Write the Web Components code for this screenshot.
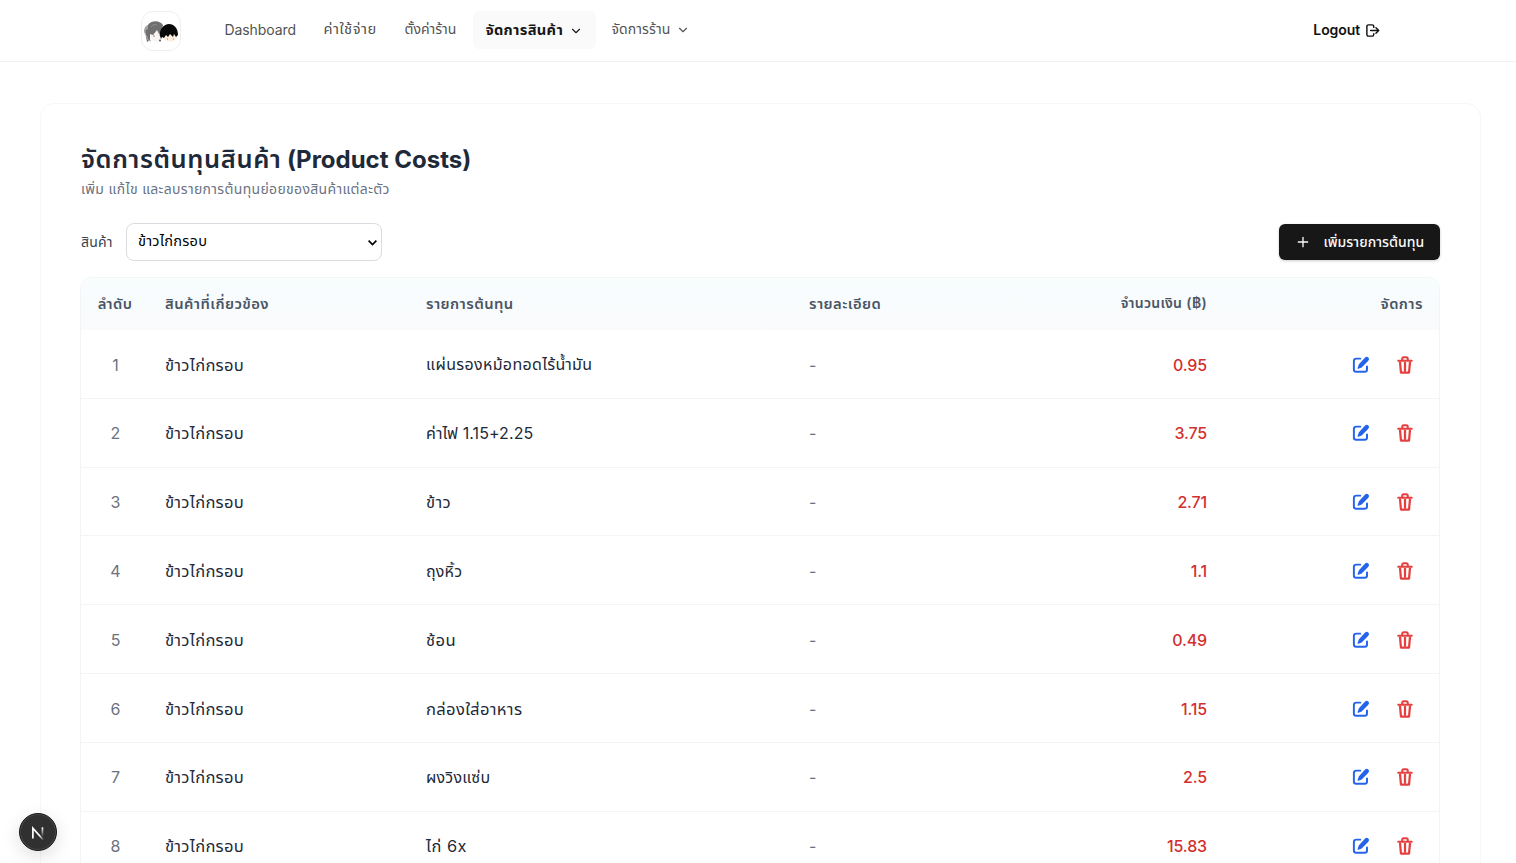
<!DOCTYPE html>
<html lang="th">
<head>
<meta charset="utf-8">
<title>Product Costs</title>
<style>
html,body{margin:0;height:863px;overflow:hidden;background:#fff}
body{font-family:Inter,"Noto Sans Thai","Noto Sans",sans-serif;color:#1e2939}
</style>
</head>
<body>
<cost-app></cost-app>
<script>
const define = (name, html) => customElements.define(name, class extends HTMLElement {
  connectedCallback() {
    if (this.shadowRoot) return;
    const root = this.attachShadow({mode: 'open'});
    root.innerHTML = typeof html === 'function' ? html(this) : html;
  }
});

const icons = {
  chevron: '<path d="m5 8.500 7 7 7-7" fill="none" stroke="currentColor" stroke-width="2.200" stroke-linecap="round" stroke-linejoin="round"/>',
  select: '<path d="m3.500 8 8.500 8.500L20.500 8" fill="none" stroke="currentColor" stroke-width="3.600"/>',
  plus: '<path d="M5 12h14M12 5v14" fill="none" stroke="currentColor" stroke-width="2" stroke-linecap="round"/>',
  logout: '<path d="M14 7V5.500A2.500 2.500 0 0 0 11.500 3H5.500A2.500 2.500 0 0 0 3 5.500v13A2.500 2.500 0 0 0 5.500 21h6a2.500 2.500 0 0 0 2.500-2.500V17M9 12h13M17.500 7.500 22 12l-4.500 4.500" fill="none" stroke="currentColor" stroke-width="2.300" stroke-linecap="round" stroke-linejoin="round"/>',
  edit: '<path d="M11 3.500H5.500a3 3 0 0 0-3 3v11.500a3 3 0 0 0 3 3H17a3 3 0 0 0 3-3v-4" fill="none" stroke="currentColor" stroke-width="2.600" stroke-linecap="round"/><path d="M18.100 2.700a2.100 2.100 0 0 1 3 3L12.600 14.400 8.300 16.200l1.600-4.700z" fill="currentColor" stroke="currentColor" stroke-width="1.800" stroke-linejoin="round"/>',
  trash: '<path d="M3 6.300h18M8.300 6V3.800a2 2 0 0 1 2-2h3.400a2 2 0 0 1 2 2V6" fill="none" stroke="currentColor" stroke-width="2.700" stroke-linecap="round" stroke-linejoin="round"/><path d="M5.300 7.500 6.600 22h10.800l1.300-14.500" fill="none" stroke="currentColor" stroke-width="3" stroke-linejoin="round"/><path d="M12 8v13" stroke="currentColor" stroke-width="3"/>'
};
define('ui-icon', el => `<style>:host{display:inline-flex;width:var(--icon,16px);height:var(--icon,16px);flex:none}svg{display:block;width:100%;height:100%;overflow:visible}</style><svg viewBox="0 0 24 24" aria-hidden="true">${icons[el.getAttribute('name')]}</svg>`);

define('brand-logo', `<style>:host{display:block;box-sizing:border-box;width:40px;height:40px;margin:1px 0 0 1px;border:1px solid #eee;border-radius:12px;overflow:hidden;background:#fff}svg{display:block}</style>
<svg width="38" height="38" viewBox="0 0 38 38">
<path d="M7 17h13v11l-5 2-6-2z" fill="#faf4f3"/><path d="M21 21h14v6l-6 3-7-2z" fill="#fdeee0"/>
<path d="M6 13c2-4 11-6 15 0l-2 8-2 1-2-4-4 5-3-1v6l-3 2-1-5-1-6z" fill="#6f6f70"/>
<path d="M6 13c-4 1-5 7-3 9l1-4 2-1z" fill="#a3a1a4"/><path d="M4 23l2 5 3 1" stroke="#aaa" fill="none"/>
<path d="M9 15c1-2 4-3 6-2" stroke="#929292" fill="none"/>
<path d="M18 24c-1-7 4-12 9-12s9 4 9 11l-2 2-2-3-1 3-3-3-2 3-2-2-2 3-2-1-1 2z" fill="#080808"/>
<circle cx="18" cy="28.500" r="1" fill="#555"/><path d="M11 24h2M17 23h1M25 27h1M31 27h1" stroke="#888"/>
</svg>`);

define('nav-item', el => `<style>
:host{display:flex;align-items:center;gap:7px;height:37px;box-sizing:border-box;font-size:14px;color:#525252;white-space:nowrap;border-radius:6px}
:host([active]){background:#fafafa;color:#171717;font-weight:700}
ui-icon{--icon:12px;margin-top:1px}
</style><slot></slot>${el.hasAttribute('menu') ? '<ui-icon name="chevron"></ui-icon>' : ''}`);

define('top-bar', `<style>
:host{display:flex;align-items:center;box-sizing:border-box;height:62px;padding:0 136px 1px 140px;border-bottom:1px solid #f1f1f2;background:#fff}
nav{display:grid;grid-template-columns:99.500px 81px 68px 123px 100px;margin-left:43px}
nav-item.latin{letter-spacing:-.08px;padding:0 0 1px .4px}
nav-item.wide{font-size:14.700px;letter-spacing:.5px}
nav-item.active{height:38px;padding:0 13px;font-size:14.700px;letter-spacing:.3px}
nav-item.last{padding-left:16px;letter-spacing:.1px}
.out{margin-left:auto;display:flex;align-items:center;gap:5px;font-size:14px;font-weight:600;color:#111}
.out span{padding-bottom:1px;letter-spacing:-.1px}
.out ui-icon{--icon:15px}
</style>
<brand-logo></brand-logo>
<nav><nav-item class="latin">Dashboard</nav-item><nav-item class="wide">ค่าใช้จ่าย</nav-item><nav-item>ตั้งค่าร้าน</nav-item><nav-item class="active" active menu>จัดการสินค้า</nav-item><nav-item class="last" menu>จัดการร้าน</nav-item></nav>
<div class="out"><span>Logout</span><ui-icon name="logout"></ui-icon></div>`);

define('product-select', `<style>
:host{display:flex;align-items:center;justify-content:space-between;box-sizing:border-box;width:256px;height:38px;padding:0 3px 0 11.500px;border:1px solid #d9dce1;border-radius:8px;font-size:14.600px;letter-spacing:.2px;color:#000;background:#fff}
ui-icon{--icon:11px}
</style><slot></slot><ui-icon name="select"></ui-icon>`);

define('primary-button', `<style>
:host{display:flex;align-items:center;gap:12.500px;box-sizing:border-box;width:161px;height:36px;padding:0 16px;border-radius:6px;background:#171717;color:#fafafa;font-size:14px;font-weight:500;letter-spacing:.05px;white-space:nowrap;box-shadow:0 1px 3px #0003}
ui-icon{--icon:16px}
</style><ui-icon name="plus"></ui-icon><slot></slot>`);

const columns = '68px 261px 383px 430px 216px';
define('cost-head', `<style>
:host{display:grid;grid-template-columns:${columns};align-items:center;height:52px;padding-top:1px;box-sizing:border-box;background:linear-gradient(#f8fdfe,#f9fafc);color:#4a5565;font-size:14.800px;font-weight:600;letter-spacing:.42px;white-space:nowrap}
span{padding:0 16px}.r{text-align:right}.c{text-align:center;padding:0}
.pair{display:flex;justify-content:space-between}b{font-weight:inherit}.money{font-size:14px;letter-spacing:.33px}
</style><span class="c">ลำดับ</span><span>สินค้าที่เกี่ยวข้อง</span><span>รายการต้นทุน</span><span class="pair"><b>รายละเอียด</b><b class="money">จำนวนเงิน (฿)</b></span><span class="r">จัดการ</span>`);

define('cost-row', el => `<style>
:host{display:grid;grid-template-columns:${columns};align-items:center;box-sizing:border-box;height:68.800px;padding-top:1.500px;border-bottom:1px solid #f3f4f6;font-size:16px;white-space:nowrap}
span{padding:0 16px}.n{text-align:center;padding:0 0 0 1px;color:#6a7282}
.th{font-size:16.600px;letter-spacing:.28px;padding-top:1px}.name{font-size:var(--size,16.600px);letter-spacing:var(--track,.28px)}
.d{display:flex;justify-content:space-between;color:#6a7282}.d b{font-weight:500;letter-spacing:-.15px;color:#d32f2f}i{font-style:normal}
.a{display:flex;justify-content:flex-end;gap:26px;padding-right:25px}
ui-icon{--icon:18px}.e{color:#2563eb}.t{color:#e5403f}
</style><span class="n">${el.getAttribute('no')}</span><span class="th">ข้าวไก่กรอบ</span><span class="th name"><slot></slot></span><span class="d"><i>-</i><b>${el.getAttribute('cost')}</b></span><span class="a"><ui-icon class="e" name="edit"></ui-icon><ui-icon class="t" name="trash"></ui-icon></span>`);

define('cost-table', `<style>
:host{display:block;box-sizing:border-box;width:1360px;border:1px solid #f2f4f6;border-radius:12px;overflow:hidden}
</style><cost-head></cost-head><slot></slot>`);

define('dev-badge', `<style>
:host{position:fixed;left:19px;top:813px;width:38px;height:38px;box-sizing:border-box;border-radius:50%;background:#303030;border:1px solid #171717;box-shadow:inset 0 0 0 1px #484848,0 5px 18px #0002}
svg{display:block}
</style><svg width="36" height="36" viewBox="0 0 36 36"><defs><linearGradient id="a" x2="1" y2="1"><stop offset=".65" stop-color="#fff"/><stop offset="1" stop-color="#fff" stop-opacity=".2"/></linearGradient><linearGradient id="b" x2="0" y2="1"><stop stop-color="#fff"/><stop offset="1" stop-color="#fff" stop-opacity="0"/></linearGradient></defs><path d="M12.900 24.500V14.200L23 25.500" fill="none" stroke="url(#a)" stroke-width="1.700"/><rect x="21.600" y="13.300" width="1.700" height="9.500" fill="url(#b)"/></svg>`);

const rows = [['แผ่นรองหม้อทอดไร้น้ำมัน','0.95',16,.35],['ค่าไฟ 1.15+2.25','3.75',16,.08],['ข้าว','2.71',16.6,.4],['ถุงหิ้ว','1.1',16,.2],['ช้อน','0.49',16.6,.4],['กล่องใส่อาหาร','1.15',16.6,.32],['ผงวิงแซ่บ','2.5',16,.2],['ไก่ 6x','15.83',16.4,.5]];
define('cost-app', `<style>
:host{display:block;height:863px;overflow:hidden}
main{box-sizing:border-box;width:1441px;height:900px;margin:41px 0 0 40px;padding:39px 40px 0;border:1px solid #f7f7f8;border-radius:14px}
h1{margin:0;height:32px;font-size:24px;line-height:32px;font-weight:700;white-space:nowrap;letter-spacing:0}
h1 span{font-size:25.500px;font-weight:600;letter-spacing:.6px}
p{margin:4px 0 0;font-size:14px;line-height:20px;color:#6a7282;white-space:nowrap;letter-spacing:.33px}
.bar{display:flex;align-items:center;height:38px;margin:24px 0 16px;width:1359px}
label{font-size:14px;color:#364153;width:44.500px;letter-spacing:.2px;white-space:nowrap}
primary-button{margin-left:auto}
cost-table{margin-left:-1px}
</style><top-bar></top-bar><main>
<h1><span>จัดการต้นทุนสินค้า</span> (Product Costs)</h1><p>เพิ่ม แก้ไข และลบรายการต้นทุนย่อยของสินค้าแต่ละตัว</p>
<div class="bar"><label>สินค้า</label><product-select>ข้าวไก่กรอบ</product-select><primary-button>เพิ่มรายการต้นทุน</primary-button></div>
<cost-table>${rows.map((r, i) => `<cost-row no="${i + 1}" cost="${r[1]}" style="--size:${r[2]}px;--track:${r[3]}px">${r[0]}</cost-row>`).join('')}</cost-table>
</main><dev-badge></dev-badge>`);
</script>
</body>
</html>
